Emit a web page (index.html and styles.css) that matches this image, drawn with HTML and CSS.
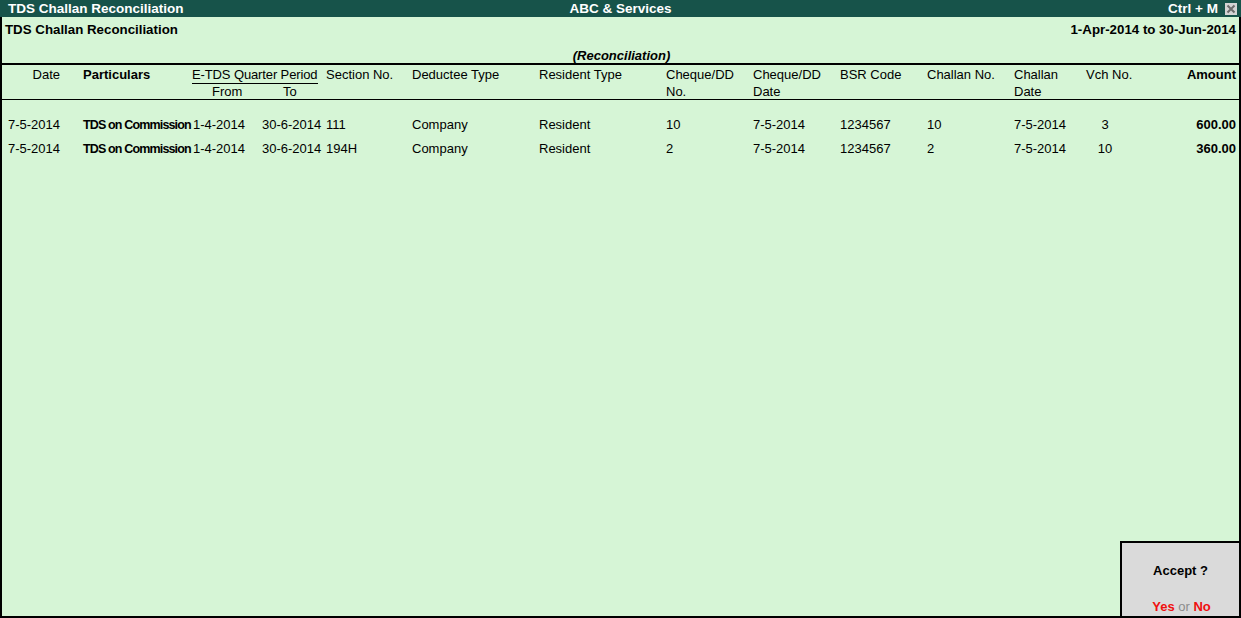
FILE: index.html
```html
<!DOCTYPE html>
<html>
<head>
<meta charset="utf-8">
<link rel="stylesheet" href="styles.css">
</head>
<body>
<div class="frame">
  <div class="titlebar">
    <div class="tb-left">TDS Challan Reconciliation</div>
    <div class="tb-center">ABC &amp; Services</div>
    <div class="tb-right">
      <span>Ctrl + M</span>
      <span class="closebox"><svg width="10" height="10" viewBox="0 0 10 10"><path d="M1.5 1.5 L8.5 8.5 M8.5 1.5 L1.5 8.5" stroke="#6b6b6b" stroke-width="2"/></svg></span>
    </div>
  </div>

  <div class="subhead">
    <div class="subrow">
      <span class="subtitle">TDS Challan Reconciliation</span>
      <span class="period">1-Apr-2014 to 30-Jun-2014</span>
    </div>
    <div class="mode">(Reconciliation)</div>
  </div>

  <div class="grid header">
    <div class="h c-date span2">Date</div>
    <div class="h c-part span2 bold">Particulars</div>
    <div class="h etds">E-TDS Quarter Period</div>
    <div class="h c-sec span2">Section No.</div>
    <div class="h c-ded span2">Deductee Type</div>
    <div class="h c-res span2">Resident Type</div>
    <div class="h c-chq span2">Cheque/DD<br>No.</div>
    <div class="h c-chqd span2">Cheque/DD<br>Date</div>
    <div class="h c-bsr span2">BSR Code</div>
    <div class="h c-chl span2">Challan No.</div>
    <div class="h c-chld span2">Challan<br>Date</div>
    <div class="h c-vch span2 vch-h">Vch No.</div>
    <div class="h c-amt span2 bold">Amount</div>
    <div class="h from-h">From</div>
    <div class="h to-h">To</div>
  </div>

  <div class="rows">
    <div class="grid row">
      <div class="c-date">7-5-2014</div>
      <div class="c-part part">TDS on Commission</div>
      <div class="c-from">1-4-2014</div>
      <div class="c-to">30-6-2014</div>
      <div class="c-sec">111</div>
      <div class="c-ded">Company</div>
      <div class="c-res">Resident</div>
      <div class="c-chq">10</div>
      <div class="c-chqd">7-5-2014</div>
      <div class="c-bsr">1234567</div>
      <div class="c-chl">10</div>
      <div class="c-chld">7-5-2014</div>
      <div class="c-vch vch-d">3</div>
      <div class="c-amt bold">600.00</div>
    </div>
    <div class="grid row">
      <div class="c-date">7-5-2014</div>
      <div class="c-part part">TDS on Commission</div>
      <div class="c-from">1-4-2014</div>
      <div class="c-to">30-6-2014</div>
      <div class="c-sec">194H</div>
      <div class="c-ded">Company</div>
      <div class="c-res">Resident</div>
      <div class="c-chq">2</div>
      <div class="c-chqd">7-5-2014</div>
      <div class="c-bsr">1234567</div>
      <div class="c-chl">2</div>
      <div class="c-chld">7-5-2014</div>
      <div class="c-vch vch-d">10</div>
      <div class="c-amt bold">360.00</div>
    </div>
  </div>

  <div class="accept">
    <div class="accept-q">Accept ?</div>
    <div class="accept-a"><span class="red">Yes</span> <span class="or">or</span> <span class="red">No</span></div>
  </div>
</div>
</body>
</html>
```

FILE: styles.css
```css
* { box-sizing: border-box; }
html, body { margin: 0; padding: 0; }
body {
  width: 1241px;
  height: 618px;
  overflow: hidden;
  font-family: "Liberation Sans", Arial, sans-serif;
  font-size: 13px;
  color: #000;
  background: #d6f5d6;
}
.frame {
  position: relative;
  width: 1241px;
  height: 618px;
  background: #d6f5d6;
  border-left: 2px solid #000;
  border-right: 2px solid #000;
  border-bottom: 2px solid #000;
}
.titlebar {
  height: 17px;
  margin-left: -2px;
  margin-right: -2px;
  background: #17534a;
  color: #fff;
  font-weight: bold;
  font-size: 13.5px;
  line-height: 17px;
  display: grid;
  grid-template-columns: 1fr auto 1fr;
  padding-left: 8px;
  padding-right: 4px;
}
.tb-center { text-align: center; padding-right: 4px; }
.tb-right {
  display: flex;
  justify-content: flex-end;
  align-items: center;
  gap: 7px;
}
.closebox {
  width: 12px;
  height: 12px;
  background: #d4d4d4;
  display: flex;
  align-items: center;
  justify-content: center;
}
.closebox svg { display: block; }

.subhead {
  padding-top: 4px;
  border-bottom: 2px solid #000;
}
.subrow {
  display: flex;
  justify-content: space-between;
  padding: 0 3px;
  line-height: 17px;
  font-weight: bold;
  font-size: 13.3px;
}
.mode {
  margin-top: 11px;
  text-align: center;
  font-weight: bold;
  font-style: italic;
  line-height: 14px;
  padding-left: 2px;
}

.grid {
  display: grid;
  grid-template-columns: 81px 109px 68px 66px 86px 127px 127px 87px 87px 87px 87px 66px 50px 1fr;
}
.header {
  grid-template-rows: 17px 16px;
  padding-top: 1px;
  border-bottom: 1px solid #000;
  line-height: 17px;
}
.span2 { grid-row: 1 / 3; }
.bold { font-weight: bold; }
.c-date { grid-column: 1; text-align: right; padding-right: 23px; }
.c-part { grid-column: 2; }
.c-from { grid-column: 3; padding-left: 1px; }
.c-to { grid-column: 4; padding-left: 2px; }
.c-sec { grid-column: 5; }
.c-ded { grid-column: 6; }
.c-res { grid-column: 7; }
.c-chq { grid-column: 8; }
.c-chqd { grid-column: 9; }
.c-bsr { grid-column: 10; }
.c-chl { grid-column: 11; }
.c-chld { grid-column: 12; }
.c-vch { grid-column: 13; }
.c-amt { grid-column: 14; text-align: right; padding-right: 3px; }

.etds {
  grid-column: 3 / 5;
  grid-row: 1;
  margin-right: 8px;
  border-bottom: 1px solid #000;
  line-height: 17px;
  height: 18px;
  letter-spacing: -0.12px;
  white-space: nowrap;
}
.from-h { grid-column: 3; grid-row: 2; padding-left: 20px; line-height: 16px; padding-top: 1px; }
.to-h { grid-column: 4; grid-row: 2; padding-left: 23px; line-height: 16px; padding-top: 1px; }
.vch-h { padding-left: 6px; white-space: nowrap; }

.rows { padding-top: 13px; }
.row { height: 24px; line-height: 24px; white-space: nowrap; }
.part { font-weight: bold; letter-spacing: -0.85px; font-size: 12.5px; }
.vch-d { text-align: center; }

.accept {
  position: absolute;
  right: -2px;
  bottom: -2px;
  width: 121px;
  height: 77px;
  background: #dadada;
  border: 2px solid #000;
  text-align: center;
  font-weight: bold;
}
.accept-q {
  margin-top: 19px;
  line-height: 17px;
}
.accept-a {
  margin-top: 19px;
  line-height: 17px;
  padding-left: 2px;
}
.red { color: #f01010; }
.or { color: #8c8c8c; font-weight: normal; }
```
